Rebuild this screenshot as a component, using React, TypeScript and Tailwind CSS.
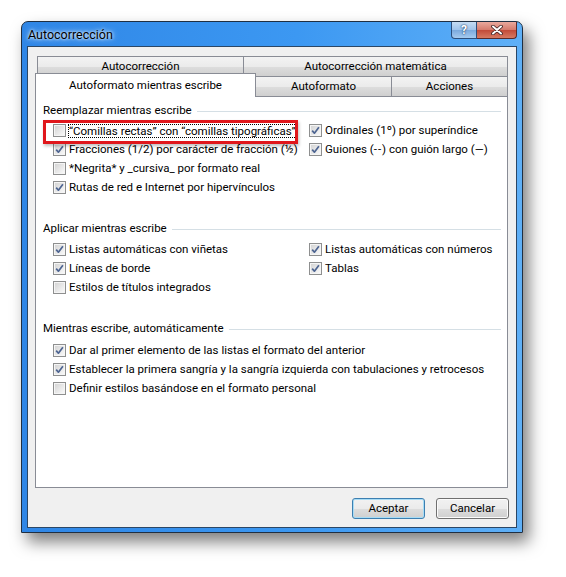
import React from "react";

type Opt = { label: React.ReactNode; checked?: boolean; focus?: boolean };

const CheckBox = ({ checked }: { checked?: boolean }) => (
  <span className="flex h-[13px] w-[13px] shrink-0 items-center justify-center border border-[#8e8f8f] bg-[#f4f4f4]">
    <span className="flex h-[11px] w-[11px] items-center justify-center border border-[#f5f5f5] bg-[linear-gradient(135deg,#d5d5d5,#f8f8f8)]">
      {checked && (
        <svg width="9" height="9" viewBox="0 0 9 9">
          <path d="M1.2 4.6 L3.4 7.2 L7.9 1.2" fill="none" stroke="#4d6491" strokeWidth="1.7" strokeLinejoin="round" />
        </svg>
      )}
    </span>
  </span>
);

const Option = ({ label, checked, focus }: Opt) => (
  <div className="flex h-[19px] items-center gap-[2px] whitespace-nowrap">
    <CheckBox checked={checked} />
    <span className={focus ? "border border-dotted border-black leading-[12px]" : "pl-[1px]"}>{label}</span>
  </div>
);

const GroupTitle = ({ children }: { children: React.ReactNode }) => (
  <div className="flex h-[16px] items-center gap-[5px]">
    <span className="whitespace-nowrap">{children}</span>
    <span className="h-px flex-1 bg-[#d5dfe5]" />
  </div>
);

const Tab = ({ label, w, active }: { label: string; w: string; active?: boolean }) => (
  <div
    className={
      active
        ? `${w} relative z-10 -mb-px flex h-[24px] items-start justify-center whitespace-nowrap border border-b-0 border-[#898c95] bg-white pt-[3px]`
        : `${w} relative flex h-[20px] items-center justify-center whitespace-nowrap border border-b-0 border-[#898c95] bg-[linear-gradient(#f3f3f3,#ebebeb_50%,#dddddd_51%,#cfcfcf)]`
    }
  >
    {label}
  </div>
);

const DlgButton = ({ label, primary }: { label: string; primary?: boolean }) => (
  <button
    className={
      primary
        ? "flex h-[21px] w-[73px] items-center justify-center rounded-[3px] border border-[#3c7fb1] bg-[linear-gradient(#f2f2f2,#ebebeb_50%,#dddddd_51%,#cfcfcf)] shadow-[inset_0_0_0_1px_#a8dcf5]"
        : "flex h-[21px] w-[73px] items-center justify-center rounded-[3px] border border-[#707070] bg-[linear-gradient(#f2f2f2,#ebebeb_50%,#dddddd_51%,#cfcfcf)] shadow-[inset_0_0_0_1px_#fbfbfb]"
    }
  >
    {label}
  </button>
);

export default function App() {
  return (
    <div className="h-[577px] w-[566px] bg-white pl-[21px] pt-[21px] font-['Roboto','Liberation_Sans',Arial,sans-serif] text-[11.5px] text-black">
      {/* window frame */}
      <div className="flex h-[512px] w-[502px] flex-col rounded-t-[7px] border border-[#1f2f42] bg-[linear-gradient(90deg,#2f86e6,#3c98f2_55%,#5fb0f7)] shadow-[6px_9px_16px_rgba(0,0,0,0.5)]">
        <div className="flex h-[24px] items-start">
          <span className="mt-[4px] pl-[6px] text-[12.5px] [text-shadow:0_0_6px_#ffffff,0_0_3px_#ffffff]">Autocorrección</span>
          <div className="ml-auto mr-[5px] flex">
            <div className="flex h-[17px] w-[26px] items-center justify-center rounded-bl-[4px] border border-t-0 border-[#2d4f7c] bg-[linear-gradient(#c5dcf3,#9fc3ea_50%,#7aa9dd_51%,#a6cbef)] text-[12px] font-bold text-white [text-shadow:0_0_2px_#1e3c66,0_0_1px_#1e3c66]">
              ?
            </div>
            <div className="flex h-[17px] w-[40px] items-center justify-center rounded-br-[4px] border border-l-0 border-t-0 border-[#5a2a2a] bg-[linear-gradient(#e9a99d,#d47a6c_50%,#c24a38_51%,#d77a62)]">
              <svg width="12" height="10" viewBox="0 0 12 10">
                <path d="M2 1.5 L10 8.5 M10 1.5 L2 8.5" stroke="#3a1f1f" strokeWidth="3.6" strokeLinecap="round" />
                <path d="M2 1.5 L10 8.5 M10 1.5 L2 8.5" stroke="#ffffff" strokeWidth="2" strokeLinecap="round" />
              </svg>
            </div>
          </div>
        </div>

        {/* client area */}
        <div className="mx-[5px] mb-[4px] flex h-[482px] flex-col border border-[#2b4766] bg-[#f0f0f0] pl-[7px] pt-[9px]">
          <div className="flex pl-[2px]">
            <Tab label="Autocorrección" w="w-[207px]" />
            <Tab label="Autocorrección matemática" w="-ml-px w-[265px]" />
          </div>
          <div className="-mt-[4px] flex h-[24px] items-end">
            <Tab label="Autoformato mientras escribe" w="w-[221px]" active />
            <Tab label="Autoformato" w="-ml-px w-[137px]" />
            <Tab label="Acciones" w="-ml-px w-[117px]" />
          </div>

          <div className="relative h-[392px] w-[473px] border border-[#898c95] bg-white pl-[7px] pr-[6px] pt-[6px]">
            <GroupTitle>Reemplazar mientras escribe</GroupTitle>
            <div className="mt-[2px] grid grid-cols-[256px_1fr] pl-[10px]">
              <div>
                <Option label={"\u201cComillas rectas\u201d con \u201ccomillas tipográficas\u201d"} focus />
                <Option label="Fracciones (1/2) por carácter de fracción (½)" checked />
                <Option label="*Negrita* y _cursiva_ por formato real" />
                <Option label="Rutas de red e Internet por hipervínculos" checked />
              </div>
              <div>
                <Option label="Ordinales (1º) por superíndice" checked />
                <Option
                  label={
                    <>
                      Guiones (<span className="tracking-[1px]">--</span>) con guión largo (—)
                    </>
                  }
                  checked
                />
              </div>
            </div>

            <div className="mt-[24px]">
              <GroupTitle>Aplicar mientras escribe</GroupTitle>
            </div>
            <div className="mt-[3px] grid grid-cols-[256px_1fr] pl-[10px]">
              <div>
                <Option label="Listas automáticas con viñetas" checked />
                <Option label="Líneas de borde" checked />
                <Option label="Estilos de títulos integrados" />
              </div>
              <div>
                <Option label="Listas automáticas con números" checked />
                <Option label="Tablas" checked />
              </div>
            </div>

            <div className="mt-[24px]">
              <GroupTitle>Mientras escribe, automáticamente</GroupTitle>
            </div>
            <div className="mt-[4px] pl-[10px]">
              <Option label="Dar al primer elemento de las listas el formato del anterior" checked />
              <Option label="Establecer la primera sangría y la sangría izquierda con tabulaciones y retrocesos" checked />
              <Option label="Definir estilos basándose en el formato personal" />
            </div>

            {/* highlight around the first option */}
            <div className="absolute left-[7px] top-[23px] h-[24px] w-[255px] border-[3px] border-[#e0171c] shadow-[1px_2px_3px_rgba(0,0,0,0.25)]" />
          </div>

          <div className="mt-[10px] flex w-[474px] justify-end gap-[11px]">
            <DlgButton label="Aceptar" primary />
            <DlgButton label="Cancelar" />
          </div>
        </div>
      </div>
    </div>
  );
}
